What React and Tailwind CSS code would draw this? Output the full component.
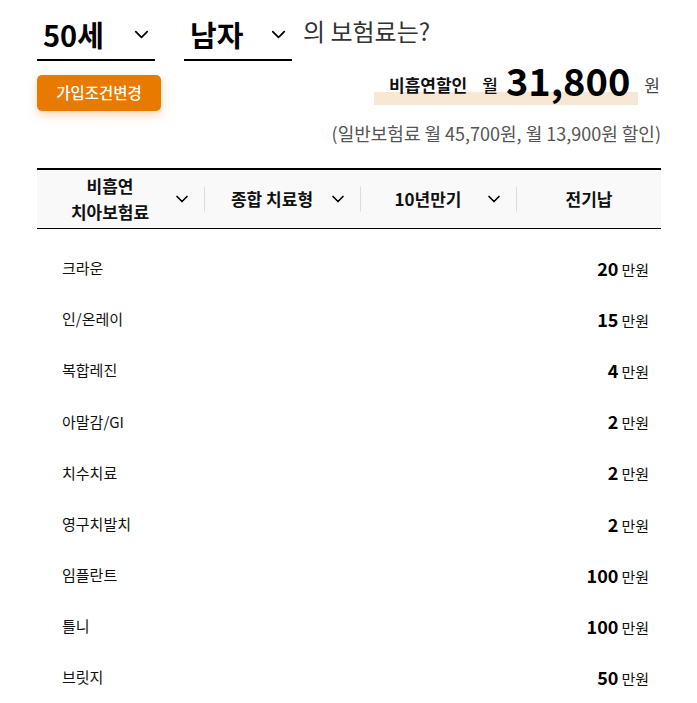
import { ChevronDown } from 'lucide-react';

const font = { fontFamily: '"Noto Sans CJK KR", "Noto Sans", sans-serif' };

const rows = [
  { name: '크라운', amount: 20 },
  { name: '인/온레이', amount: 15 },
  { name: '복합레진', amount: 4 },
  { name: '아말감/GI', amount: 2 },
  { name: '치수치료', amount: 2 },
  { name: '영구치발치', amount: 2 },
  { name: '임플란트', amount: 100 },
  { name: '틀니', amount: 100 },
  { name: '브릿지', amount: 50 },
];

function Select({ label, width }) {
  return (
    <div className={`flex items-center justify-between border-b-2 border-black h-[44px] pb-[8px] pl-[6px] pr-[2px] ${width}`}>
      <span className="text-[29px] font-bold text-black leading-none">{label}</span>
      <ChevronDown className="w-[23px] h-[23px] text-black" strokeWidth={1.8} />
    </div>
  );
}

function HeaderCell({ children, chevron, width, last }) {
  return (
    <div className={`relative flex items-center h-full ${width}`}>
      <div className={`flex-1 flex items-center justify-center ${chevron ? 'pr-[22px]' : ''}`}>
        <span className="text-[17px] font-bold text-[#111] text-center leading-[26px]">{children}</span>
      </div>
      {chevron && (
        <ChevronDown className="absolute right-[13px] top-1/2 -translate-y-1/2 w-[20px] h-[20px] text-black" strokeWidth={2} />
      )}
      {!last && <div className="absolute right-0 top-1/2 -translate-y-1/2 w-px h-[25px] bg-[#dcdcdc]" />}
    </div>
  );
}

export default function App() {
  return (
    <div className="bg-white w-[697px] h-[703px] overflow-hidden" style={font}>
      <div className="ml-[37px] w-[624px] pt-[17px]">
        {/* Top selects */}
        <div className="flex items-end">
          <Select label="50세" width="w-[118px]" />
          <div className="ml-[29px]">
            <Select label="남자" width="w-[108px]" />
          </div>
          <span className="ml-[11px] mb-[18px] text-[24px] text-[#333] leading-none">의 보험료는?</span>
        </div>

        {/* Button + price */}
        <div className="flex items-start justify-between mt-[14px]">
          <button className="w-[124px] h-[36px] rounded-[5px] bg-[#e87a00] text-white text-[15.5px] font-medium shadow-[0_4px_10px_rgba(240,140,50,0.35)]">
            가입조건변경
          </button>
          <div className="flex items-end pr-[1px] -mt-[19px]">
            <div className="relative flex items-end">
              <div className="absolute left-0 right-0 bottom-[-1px] h-[13px] bg-[#f8e8d3]" />
              <span className="relative pl-[15px] text-[17px] font-bold text-[#111] mb-[7px]">비흡연할인</span>
              <span className="relative ml-[15px] text-[17px] font-medium text-[#111] mb-[7px]">월</span>
              <span className="relative ml-[8px] text-[38px] font-bold text-black leading-[48px] pr-[8px]">31,800</span>
            </div>
            <span className="ml-[6px] text-[17px] text-[#444] mb-[7px]">원</span>
          </div>
        </div>

        <div className="text-right text-[18px] text-[#555] mt-[9px] leading-[26px]">
          (일반보험료 월 45,700원, 월 13,900원 할인)
        </div>

        {/* Table header */}
        <div className="mt-[22px] flex h-[61px] bg-[#f9f9f9] border-t-2 border-black border-b border-b-black">
          <HeaderCell chevron width="w-[168px]">
            비흡연
            <br />
            치아보험료
          </HeaderCell>
          <HeaderCell chevron width="w-[156px]">종합 치료형</HeaderCell>
          <HeaderCell chevron width="w-[156px]">10년만기</HeaderCell>
          <HeaderCell last width="flex-1">전기납</HeaderCell>
        </div>

        {/* Rows */}
        <div className="pt-[14px]">
          {rows.map((r) => (
            <div key={r.name} className="flex items-center justify-between h-[51.1px] pl-[25px] pr-[12px]">
              <span className="text-[15px] text-[#111]">{r.name}</span>
              <span className="flex items-baseline">
                <span className="text-[18px] font-bold text-black">{r.amount}</span>
                <span className="ml-[3px] text-[15px] text-[#111]">만원</span>
              </span>
            </div>
          ))}
        </div>
      </div>
    </div>
  );
}
